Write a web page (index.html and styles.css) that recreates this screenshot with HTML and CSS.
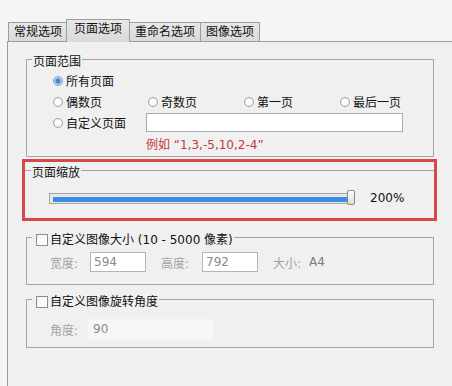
FILE: index.html
```html
<!DOCTYPE html>
<html lang="zh-CN">
<head>
    <meta charset="UTF-8">
    <meta name="viewport" content="width=device-width, initial-scale=1.0">
    <title>页面选项</title>
    <link rel="stylesheet" href="styles.css">
</head>
<body>
    <div class="tabs">
        <div class="tab">常规选项</div>
        <div class="tab active">页面选项</div>
        <div class="tab">重命名选项</div>
        <div class="tab">图像选项</div>
    </div>

    <div class="panel">
        <fieldset class="group range-group">
            <legend>页面范围</legend>
            <div class="range-grid">
                <label class="opt"><input type="radio" name="range" checked>所有页面</label>
                <span></span><span></span><span></span>
                <label class="opt"><input type="radio" name="range">偶数页</label>
                <label class="opt"><input type="radio" name="range">奇数页</label>
                <label class="opt"><input type="radio" name="range">第一页</label>
                <label class="opt"><input type="radio" name="range">最后一页</label>
                <label class="opt"><input type="radio" name="range">自定义页面</label>
                <input type="text" class="pages-input">
                <div class="hint">例如 “1,3,-5,10,2-4”</div>
            </div>
        </fieldset>

        <div class="highlight">
            <fieldset class="group zoom-group">
                <legend>页面缩放</legend>
                <div class="zoom-row">
                    <div class="slider">
                        <div class="slider-fill"></div>
                        <div class="slider-thumb"></div>
                    </div>
                    <span class="zoom-value">200%</span>
                </div>
            </fieldset>
        </div>

        <fieldset class="group size-group">
            <legend><label><input type="checkbox">自定义图像大小 (10 - 5000 像素)</label></legend>
            <div class="field-row">
                <span class="field-label w40">宽度:</span>
                <input type="text" class="num-input" value="594" disabled>
                <span class="field-label w41 gap">高度:</span>
                <input type="text" class="num-input" value="792" disabled>
                <span class="field-label w36 gap">大小:</span>
                <span class="plain-value">A4</span>
            </div>
        </fieldset>

        <fieldset class="group rotate-group">
            <legend><label><input type="checkbox">自定义图像旋转角度</label></legend>
            <div class="field-row">
                <span class="field-label w38">角度:</span>
                <input type="text" class="angle-input" value="90" disabled>
            </div>
        </fieldset>
    </div>
</body>
</html>
```

FILE: styles.css
```css
body {
    margin: 0;
    background-color: #f5f5f5;
    font-family: "DejaVu Sans", "Noto Sans CJK SC", sans-serif;
    font-size: 12px;
    color: #111;
    overflow: hidden;
}
.tabs {
    display: flex;
    align-items: flex-end;
    padding: 19px 0 0 8px;
}
.tab {
    height: 18px;
    line-height: 18px;
    padding: 0 5px;
    margin-right: -1px;
    border: 1px solid #9c9c9c;
    border-bottom: none;
    background: linear-gradient(#e8e8e8, #d9d9d9);
    white-space: nowrap;
}
.tab.active {
    position: relative;
    z-index: 1;
    height: 19px;
    padding: 0 7px 3px;
    margin: 0 -1px -1px -1px;
    line-height: 18px;
    background-color: #f0f0f0;
}
.panel {
    margin-left: 7px;
    height: calc(100vh - 40px);
    border-top: 1px solid #9c9c9c;
    border-left: 1px solid #9c9c9c;
    background-color: #f0f0f0;
}
.group {
    box-sizing: border-box;
    width: 408px;
    margin: 0 0 0 18px;
    padding: 0 0 0 5px;
    border: 1px solid #a4a4a4;
}
.group legend {
    padding: 6px 1px 0;
    line-height: 16px;
}
.range-group {
    margin-top: 6px;
    padding-bottom: 2px;
}
.range-grid {
    display: grid;
    grid-template-columns: 95px 96px 96px auto;
    grid-auto-rows: 21px;
    align-items: center;
    margin-left: 21px;
}
.opt {
    display: flex;
    align-items: center;
    white-space: nowrap;
}
input[type="radio"] {
    appearance: none;
    box-sizing: border-box;
    width: 10px;
    height: 10px;
    margin: 0 3px 0 0;
    border: 1px solid #a2a2a2;
    border-radius: 50%;
    background: radial-gradient(circle, #fff 40%, #e2e2e2);
}
input[type="radio"]:checked {
    border-color: #7d9fc6;
    background: radial-gradient(circle, #2b78d0 0, #4b8fdc 2px, #b9d3ef 3.5px, #fff 4.5px);
}
.pages-input {
    grid-column: 2 / 5;
    box-sizing: border-box;
    width: 257px;
    height: 19px;
    margin-left: -2px;
    border: 1px solid #ababab;
    background-color: #fff;
}
.hint {
    grid-column: 2 / 5;
    margin-left: -2px;
    color: #c3393c;
}
.highlight {
    box-sizing: border-box;
    width: 415px;
    margin: 2px 0 0 14px;
    padding-bottom: 10px;
    border: 3px solid #d8474b;
}
.zoom-group {
    width: 409px;
    margin: -3px 0 0;
    padding-left: 6px;
    border: none;
    border-top: 1px solid #a4a4a4;
}
.zoom-row {
    display: flex;
    align-items: center;
    height: 20px;
    margin: 7px 0 0 18px;
}
.slider {
    position: relative;
    box-sizing: border-box;
    width: 306px;
    height: 11px;
    border: 1px solid #a5a5a5;
    background-color: #e8e8e8;
}
.slider-fill {
    width: 294px;
    height: 5px;
    margin: 3px 0 0 3px;
    background-color: #3a8de3;
}
.slider-thumb {
    position: absolute;
    top: -4px;
    right: -1px;
    box-sizing: border-box;
    width: 8px;
    height: 15px;
    border: 1px solid #8a8a8a;
    border-radius: 2px;
    background: linear-gradient(#fdfdfd, #dcdcdc);
}
.zoom-value {
    margin-left: 15px;
}
.size-group legend label,
.rotate-group legend label {
    display: flex;
    align-items: center;
}
input[type="checkbox"] {
    appearance: none;
    box-sizing: border-box;
    width: 12px;
    height: 12px;
    margin: 0 2px 0 3px;
    border: 1px solid #8e8e8e;
    background: linear-gradient(135deg, #f4f4f4, #fff);
}
.size-group {
    margin-top: 5px;
    padding-bottom: 12px;
}
.rotate-group {
    margin-top: 3px;
    padding-bottom: 8px;
}
.field-row {
    display: flex;
    align-items: center;
    height: 20px;
    margin: 4px 0 0 18px;
    color: #a3a3a3;
}
.rotate-group .field-row {
    margin-top: 9px;
}
.field-label { white-space: nowrap; }
.w36 { width: 36px; }
.w38 { width: 38px; }
.w40 { width: 40px; }
.w41 { width: 41px; }
.gap { margin-left: 15px; }
.num-input {
    box-sizing: border-box;
    width: 56px;
    height: 20px;
    padding: 0 3px;
    border: 1px solid #b4b4b4;
    background-color: #fff;
    font: inherit;
    color: #8a8a8a;
}
.plain-value {
    color: #7a7a7a;
}
.angle-input {
    box-sizing: border-box;
    width: 125px;
    height: 20px;
    padding: 0 5px;
    border: none;
    background-color: #f6f6f6;
    font: inherit;
    color: #8a8a8a;
}
```
